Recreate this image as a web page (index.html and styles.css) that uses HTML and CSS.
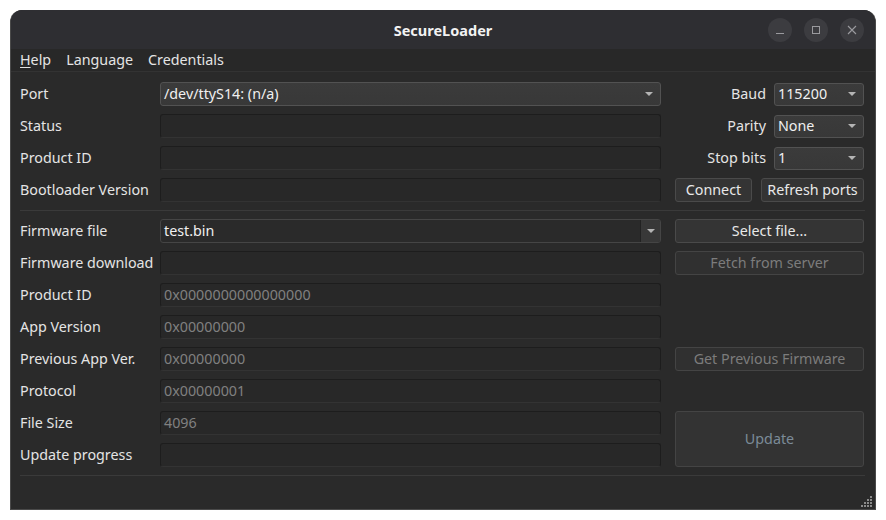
FILE: index.html
```html
<!DOCTYPE html>
<html lang="en">

<head>
    <meta charset="UTF-8">
    <meta name="viewport" content="width=device-width, initial-scale=1.0">
    <title>SecureLoader</title>
    <link rel="stylesheet" href="styles.css">
</head>

<body>

    <div class="window">
        <div class="titlebar">
            <span class="title">SecureLoader</span>
            <div class="wm-buttons">
                <span class="wm-btn">
                    <svg width="10" height="10" viewBox="0 0 10 10"><path d="M1 8.5h8" stroke="#9a9a9e" stroke-width="1"/></svg>
                </span>
                <span class="wm-btn">
                    <svg width="10" height="10" viewBox="0 0 10 10"><rect x="1.5" y="1.5" width="7" height="7" fill="none" stroke="#9a9a9e" stroke-width="1"/></svg>
                </span>
                <span class="wm-btn">
                    <svg width="10" height="10" viewBox="0 0 10 10"><path d="M1 1L9 9M9 1L1 9" stroke="#9a9a9e" stroke-width="1.1"/></svg>
                </span>
            </div>
        </div>

        <div class="menubar">
            <span class="menu"><u>H</u>elp</span>
            <span class="menu">Language</span>
            <span class="menu">Credentials</span>
        </div>

        <div class="content">
            <!-- serial connection -->
            <div class="form">
                <label>Port</label>
                <div class="combo"><span>/dev/ttyS14: (n/a)</span><i class="arrow"></i></div>
                <div class="opt">
                    <label>Baud</label>
                    <div class="combo small"><span>115200</span><i class="arrow"></i></div>
                </div>

                <label>Status</label>
                <div class="field"></div>
                <div class="opt">
                    <label>Parity</label>
                    <div class="combo small"><span>None</span><i class="arrow"></i></div>
                </div>

                <label>Product ID</label>
                <div class="field"></div>
                <div class="opt">
                    <label>Stop bits</label>
                    <div class="combo small"><span>1</span><i class="arrow"></i></div>
                </div>

                <label>Bootloader Version</label>
                <div class="field"></div>
                <div class="btn-row">
                    <button class="btn connect">Connect</button>
                    <button class="btn refresh">Refresh ports</button>
                </div>
            </div>

            <hr class="sep">

            <!-- firmware -->
            <div class="form">
                <label>Firmware file</label>
                <div class="combo editable"><span>test.bin</span><b class="drop"><i class="arrow"></i></b></div>
                <button class="btn">Select file...</button>

                <label>Firmware download</label>
                <div class="field"></div>
                <button class="btn" disabled>Fetch from server</button>

                <label>Product ID</label>
                <div class="field ro">0x0000000000000000</div>
                <div></div>

                <label>App Version</label>
                <div class="field ro">0x00000000</div>
                <div></div>

                <label>Previous App Ver.</label>
                <div class="field ro">0x00000000</div>
                <button class="btn" disabled>Get Previous Firmware</button>

                <label>Protocol</label>
                <div class="field ro">0x00000001</div>
                <div></div>

                <label>File Size</label>
                <div class="field ro">4096</div>
                <button class="btn update" disabled>Update</button>

                <label>Update progress</label>
                <div class="field"></div>
            </div>

            <hr class="sep">
        </div>

        <div class="statusbar">
            <svg class="grip" width="12" height="12" viewBox="0 0 12 12" fill="#8a8a8a">
                <rect x="9" y="0" width="2" height="2"/>
                <rect x="6" y="3" width="2" height="2"/><rect x="9" y="3" width="2" height="2"/>
                <rect x="3" y="6" width="2" height="2"/><rect x="6" y="6" width="2" height="2"/><rect x="9" y="6" width="2" height="2"/>
                <rect x="0" y="9" width="2" height="2"/><rect x="3" y="9" width="2" height="2"/><rect x="6" y="9" width="2" height="2"/><rect x="9" y="9" width="2" height="2"/>
            </svg>
        </div>
    </div>

</body>

</html>
```

FILE: styles.css
```css
body {
    margin: 0;
    background: #ffffff;
    font-family: "Noto Sans", "DejaVu Sans", sans-serif;
    font-size: 14.3px;
    color: #e4e4e4;
}

.window {
    margin: 10px 0 0 10px;
    width: 866px;
    height: 500px;
    box-sizing: border-box;
    display: flex;
    flex-direction: column;
    background: #2a2a2a;
    border: 1px solid #4a4a4a;
    border-top: none;
    border-radius: 12px 12px 0 0;
    overflow: hidden;
}

.titlebar {
    height: 39px;
    flex: none;
    background: #2e2e32;
    display: flex;
    align-items: center;
    justify-content: center;
    position: relative;
}

.title {
    font-weight: bold;
    font-size: 14.5px;
    color: #f2f2f2;
}

.wm-buttons {
    position: absolute;
    right: 11px;
    top: 8px;
    display: flex;
    gap: 12px;
}

.wm-btn {
    width: 24px;
    height: 24px;
    border-radius: 50%;
    background: #3c3c40;
    display: flex;
    align-items: center;
    justify-content: center;
}

.menubar {
    height: 23px;
    box-sizing: border-box;
    padding-bottom: 2px;
    flex: none;
    display: flex;
    align-items: center;
    padding-left: 9px;
    gap: 15px;
    background: #282828;
    border-bottom: 1px solid #333333;
}

.menu u {
    text-decoration-thickness: 1px;
    text-underline-offset: 2px;
}

.content {
    padding: 10px 10px 0 9px;
}

.form {
    display: grid;
    grid-template-columns: 126px 501px 189px;
    grid-auto-rows: 24px;
    column-gap: 14px;
    row-gap: 8px;
}

.form label {
    white-space: nowrap;
    display: flex;
    align-items: center;
    padding-bottom: 2px;
}

.field {
    box-sizing: border-box;
    background: #282828;
    border: 1px solid #1d1d1d;
    border-bottom-color: #333333;
    border-radius: 3px;
    padding: 0 0 2px 3px;
    display: flex;
    align-items: center;
}

.field.ro {
    color: #808080;
}

.combo {
    box-sizing: border-box;
    background: linear-gradient(#3b3b3b, #383838);
    border: 1px solid #525252;
    border-radius: 3px;
    display: flex;
    align-items: center;
    justify-content: space-between;
    padding: 0 7px 0 3px;
    color: #f0f0f0;
}

.combo span {
    padding-bottom: 2px;
}

.combo.small {
    width: 90px;
}

.combo.editable {
    background: #2a2a2a;
    border-color: #454545;
    padding: 0 0 0 3px;
}

.combo .drop {
    align-self: stretch;
    width: 19px;
    background: #383838;
    border-left: 1px solid #222222;
    display: flex;
    align-items: center;
    justify-content: center;
    border-radius: 0 2px 2px 0;
}

.arrow {
    width: 0;
    height: 0;
    border-left: 4px solid transparent;
    border-right: 4px solid transparent;
    border-top: 4px solid #b4b4b4;
}

.opt {
    display: flex;
    justify-content: flex-end;
    align-items: center;
    gap: 8px;
}

.opt label {
    padding-bottom: 2px;
}

.btn-row {
    display: flex;
    gap: 9px;
}

.btn {
    box-sizing: border-box;
    font-family: inherit;
    font-size: 14.3px;
    color: #e8e8e8;
    background: #343434;
    border: 1px solid #4a4a4a;
    border-radius: 3px;
    padding: 0 0 2px 0;
}

.btn:disabled {
    color: #7c7c7c;
    background: #303030;
    border-color: #444444;
}

.connect {
    width: 77px;
}

.refresh {
    width: 103px;
}

.update {
    grid-column: 3;
    grid-row: 7 / span 2;
}

.btn.update:disabled {
    color: #7b8b98;
    background: #333333;
}

.sep {
    border: none;
    border-top: 1px solid #3a3a3a;
    margin: 8px 0 8px 0;
}

.statusbar {
    flex: 1;
    position: relative;
}

.grip {
    position: absolute;
    right: 2px;
    bottom: 1px;
}
```
